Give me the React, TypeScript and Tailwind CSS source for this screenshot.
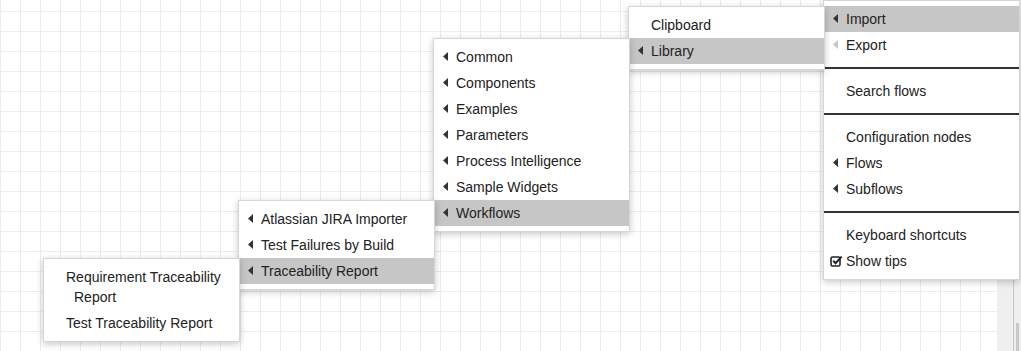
type Item =
  | { label: string; caret?: "dark" | "light"; active?: boolean; check?: boolean; hang?: boolean }
  | { sep: true }

function Caret({ light }: { light?: boolean }) {
  return (
    <svg className="absolute left-[9px] top-[8px]" width="5" height="9" viewBox="0 0 5 9">
      <polygon points="5,0 5,9 0,4.5" fill={light ? "#c8c8c8" : "#333"} />
    </svg>
  )
}

function CheckIcon() {
  return (
    <svg className="absolute left-[6px] top-[7px]" width="13" height="12" viewBox="0 0 13 12">
      <rect x="1" y="2" width="9" height="9" rx="1.5" fill="none" stroke="#222" strokeWidth="1.6" />
      <path d="M3.2 5.8 L5.6 8.2 L11.6 1.6" fill="none" stroke="#222" strokeWidth="2" />
    </svg>
  )
}

function Menu({ items, className }: { items: Item[]; className: string }) {
  return (
    <div
      className={`absolute border border-[#d6d6d6] bg-white py-[5px] shadow-[0_2px_7px_rgba(0,0,0,0.22)] ${className}`}
    >
      {items.map((it, i) =>
        "sep" in it ? (
          <div key={i} className="my-[9px] h-[2px] bg-[#333]" />
        ) : (
          <div
            key={i}
            className={`relative py-[3px] pr-[8px] text-[14px] leading-[20px] text-[#222] ${
              it.hang ? "pl-[30px] -indent-2" : "pl-[22px]"
            } ${it.active ? "bg-[#c6c6c6]" : ""}`}
          >
            {it.caret ? <Caret light={it.caret === "light"} /> : null}
            {it.check ? <CheckIcon /> : null}
            {it.label}
          </div>
        )
      )}
    </div>
  )
}

export default function App() {
  return (
    <div
      className="relative flex h-[351px] w-[1021px] overflow-hidden bg-white"
      style={{ fontFamily: '"Liberation Sans", Arial, sans-serif' }}
    >
      <div className="h-full flex-1 bg-[linear-gradient(to_right,#ececec_1px,transparent_1px),linear-gradient(to_bottom,#ececec_1px,transparent_1px)] bg-[size:20px_20px] bg-[position:0_11px]" />
      <div className="flex h-full w-[24px] bg-[#efefef]">
        <div className="w-[16px]" />
        <div className="w-px bg-[#c4c4c4]" />
        <div className="flex flex-1 flex-col pl-[2px]">
          <div className="h-[323px]" />
          <div className="w-[3px] flex-1 bg-[#c8c8c8]" />
        </div>
      </div>

      {/* menus cascade to the left; each submenu sits over its parent */}
      <Menu
        className="left-[823px] top-0 z-10 w-[197px]"
        items={[
          { label: "Import", caret: "dark", active: true },
          { label: "Export", caret: "light" },
          { sep: true },
          { label: "Search flows" },
          { sep: true },
          { label: "Configuration nodes" },
          { label: "Flows", caret: "dark" },
          { label: "Subflows", caret: "dark" },
          { sep: true },
          { label: "Keyboard shortcuts" },
          { label: "Show tips", check: true },
        ]}
      />
      <Menu
        className="left-[628px] top-[6px] z-20 w-[197px]"
        items={[{ label: "Clipboard" }, { label: "Library", caret: "dark", active: true }]}
      />
      <Menu
        className="left-[433px] top-[38px] z-30 w-[197px]"
        items={[
          { label: "Common", caret: "dark" },
          { label: "Components", caret: "dark" },
          { label: "Examples", caret: "dark" },
          { label: "Parameters", caret: "dark" },
          { label: "Process Intelligence", caret: "dark" },
          { label: "Sample Widgets", caret: "dark" },
          { label: "Workflows", caret: "dark", active: true },
        ]}
      />
      <Menu
        className="left-[238px] top-[200px] z-40 w-[197px]"
        items={[
          { label: "Atlassian JIRA Importer", caret: "dark" },
          { label: "Test Failures by Build", caret: "dark" },
          { label: "Traceability Report", caret: "dark", active: true },
        ]}
      />
      <Menu
        className="left-[43px] top-[258px] z-50 w-[197px]"
        items={[
          { label: "Requirement Traceability Report", hang: true },
          { label: "Test Traceability Report" },
        ]}
      />
    </div>
  )
}
